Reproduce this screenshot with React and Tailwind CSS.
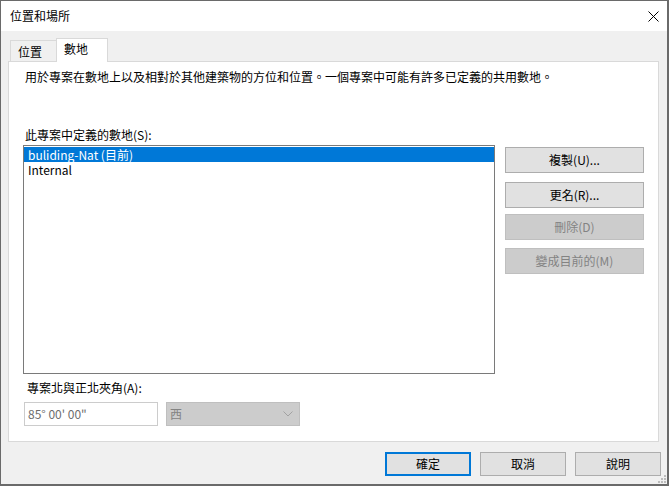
import React from "react";

const font = { fontFamily: '"Microsoft JhengHei", "Noto Sans CJK TC", "Noto Sans", sans-serif' };

function Btn({ children, disabled }) {
  let cls =
    "w-[139px] h-[26px] flex items-center justify-center text-[12px] leading-[16px] border ";
  if (disabled) cls += "bg-[#cccccc] border-[#bfbfbf] text-[#838383]";
  else cls += "bg-[#e1e1e1] border-[#adadad] text-black";
  return <div className={cls}>{children}</div>;
}

function BottomBtn({ children, primary }) {
  return (
    <div
      className={
        "w-[86px] h-[24px] flex items-center justify-center text-[12px] leading-[16px] bg-[#e1e1e1] text-black " +
        (primary ? "border-2 border-[#0078d7]" : "border border-[#adadad]")
      }
    >
      {children}
    </div>
  );
}

export default function App() {
  return (
    <div
      style={font}
      className="w-[669px] h-[486px] flex flex-col border border-[#6a6a6a] border-r-2 border-b-2 bg-[#f0f0f0] text-[12px] text-black overflow-hidden"
    >
      {/* title bar */}
      <div className="h-[30px] bg-white flex items-center justify-between pl-[9px] pr-[8px] shrink-0">
        <span className="text-[12px] leading-[16px]">位置和場所</span>
        <svg width="11" height="11" viewBox="0 0 11 11" className="block">
          <path d="M0.5 0.5 L10.5 10.5 M10.5 0.5 L0.5 10.5" stroke="#000" strokeWidth="1" fill="none" />
        </svg>
      </div>

      {/* body */}
      <div className="flex-1 flex flex-col relative">
        {/* tabs */}
        <div className="mt-[7px] pl-[9px] flex items-end h-[23px]">
          <div className="w-[46px] h-[21px] border-l border-t border-[#d9d9d9] bg-[#f0f0f0] pl-[7px] pt-[3px] leading-[16px]">
            位置
          </div>
          <div className="relative z-10 w-[52px] h-[24px] -mb-[1px] border-l border-t border-r border-[#d9d9d9] bg-white pl-[7px] pt-[2px] leading-[16px]">
            數地
          </div>
        </div>

        {/* panel */}
        <div className="ml-[7px] w-[651px] h-[381px] border border-[#d9d9d9] bg-white flex flex-col">
          <div className="mt-[7px] pl-[16px] leading-[16px] whitespace-nowrap">
            用於專案在數地上以及相對於其他建築物的方位和位置。一個專案中可能有許多已定義的共用數地。
          </div>
          <div className="mt-[42px] pl-[16px] leading-[16px]">此專案中定義的數地(S):</div>
          <div className="mt-[2px] flex">
            <div className="ml-[14px] w-[472px] h-[229px] border border-[#7a7a7a] bg-white pt-[1px] overflow-hidden">
              <div className="h-[15px] bg-[#0078d7] text-white leading-[15px] pl-[4px] overflow-hidden">buliding-Nat (目前)</div>
              <div className="h-[15px] leading-[15px] pl-[4px] overflow-hidden">Internal</div>
            </div>
            <div className="ml-[10px] mt-[2px] flex flex-col">
              <Btn>複製(U)...</Btn>
              <div className="h-[9px]" />
              <Btn>更名(R)...</Btn>
              <div className="h-[6px]" />
              <Btn disabled>刪除(D)</Btn>
              <div className="h-[8px]" />
              <Btn disabled>變成目前的(M)</Btn>
            </div>
          </div>
          <div className="mt-[6px] pl-[18px] leading-[16px]">專案北與正北夾角(A):</div>
          <div className="mt-[6px] flex">
            <div className="ml-[15px] w-[134px] h-[24px] border border-[#cccccc] bg-white flex items-center pl-[3px] text-[#6d6d6d]">
              85° 00' 00"
            </div>
            <div className="ml-[8px] w-[134px] h-[24px] border border-[#bfbfbf] bg-[#cccccc] flex items-center justify-between pl-[3px] pr-[6px] text-[#838383]">
              <span>西</span>
              <svg width="10" height="6" viewBox="0 0 10 6">
                <path d="M0.5 0.5 L5 5 L9.5 0.5" stroke="#a2a2a2" strokeWidth="1" fill="none" />
              </svg>
            </div>
          </div>
        </div>

        {/* bottom buttons */}
        <div className="mt-[10px] flex justify-end pr-[6px] gap-[9px]">
          <BottomBtn primary>確定</BottomBtn>
          <BottomBtn>取消</BottomBtn>
          <BottomBtn>說明</BottomBtn>
        </div>

        {/* size grip */}
        <div className="absolute right-[1px] bottom-[1px] w-[8px] h-[8px]">
          <svg width="8" height="8" viewBox="0 0 8 8" className="block">
            <rect x="6" y="0" width="2" height="2" fill="#bcbcbc" />
            <rect x="3" y="3" width="2" height="2" fill="#bcbcbc" />
            <rect x="6" y="3" width="2" height="2" fill="#bcbcbc" />
            <rect x="0" y="6" width="2" height="2" fill="#bcbcbc" />
            <rect x="3" y="6" width="2" height="2" fill="#bcbcbc" />
            <rect x="6" y="6" width="2" height="2" fill="#bcbcbc" />
          </svg>
        </div>
      </div>
    </div>
  );
}
